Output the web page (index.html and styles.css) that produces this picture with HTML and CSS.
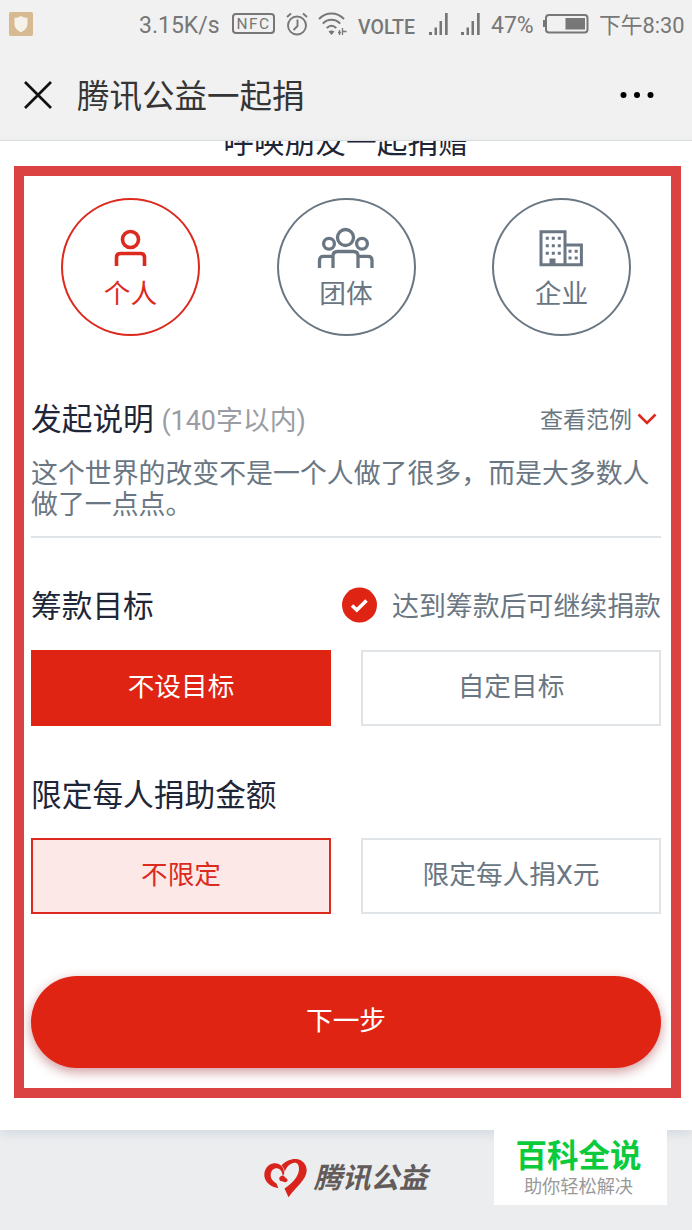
FILE: index.html
```html
<!DOCTYPE html>
<html lang="zh-CN">
<head>
<meta charset="UTF-8">
<meta name="viewport" content="width=device-width, initial-scale=1">
<title>腾讯公益一起捐</title>
<link rel="stylesheet" href="styles.css">
</head>
<body>
    <div class="status-bar">
        <svg class="shield" width="24" height="24" viewBox="0 0 24 24">
            <rect width="24" height="24" rx="2" fill="#d7b992"/>
            <path d="M12 4C10 5.3 8 5.8 5.5 5.8V12c0 3.6 2.500 6.3 6.500 8.2 4-1.9 6.500-4.6 6.500-8.2V5.8C16 5.8 14 5.3 12 4z" fill="#f6f1e9"/>
        </svg>
        <div class="status-right">
            <span class="speed">3.15K/s</span>
            <span class="nfc">NFC</span>
            <svg class="alarm" width="22" height="24" viewBox="0 0 22 24" fill="none" stroke="#777" stroke-width="1.9">
                <circle cx="11" cy="13.5" r="9"/>
                <path d="M11.500 7.500v6.500l-4 4M1 5l4-3.500M21 5l-4-3.500"/>
            </svg>
            <svg class="wifi" width="29" height="24" viewBox="0 0 29 24" fill="none" stroke="#777" stroke-width="2">
                <path d="M1 7C8-.3 19-.3 26 7M4.800 11.600c5-5 12.400-5 17.400 0M8.700 16c3-2.800 6.600-2.800 9.600 0"/>
                <path d="M10.500 19.500c2-1.300 4-1.300 6 0l-3 3.500z" fill="#777" stroke="none"/>
                <path d="M21.500 18v5M24.500 16v7M20 20.500h3M24 19.500h4.500" stroke-width="1.3"/>
            </svg>
            <span class="volte">VOLTE</span>
            <svg class="signal" width="20" height="24" viewBox="0 0 20 24" fill="#777">
                <path d="M0 20h3v3H0zM5.500 15.500H8V23H5.500zM10.500 9H13v14h-2.500zM16 1h2.700v22H16z"/>
            </svg>
            <svg class="signal" width="20" height="24" viewBox="0 0 20 24" fill="#777">
                <path d="M0 20h3v3H0zM5.500 15.500H8V23H5.500zM10.500 9H13v14h-2.500zM16 1h2.700v22H16z"/>
            </svg>
            <span class="percent">47%</span>
            <svg class="battery" width="46" height="20" viewBox="0 0 46 20">
                <rect x="3" y="1" width="41.5" height="17.5" rx="3" fill="none" stroke="#777" stroke-width="2"/>
                <path d="M0 6h2.500v7H0zM22.500 4H42v11.500H22.500z" fill="#777"/>
            </svg>
            <span class="time">下午8:30</span>
        </div>
    </div>

    <div class="nav-bar">
        <svg class="close" width="28" height="28" viewBox="0 0 28 28" stroke="#111" stroke-width="2.7">
            <path d="M1 1l26 26M27 1L1 27"/>
        </svg>
        <div class="nav-title">腾讯公益一起捐</div>
        <svg class="more" width="34" height="8" viewBox="0 0 34 8" fill="#000">
            <circle cx="3.5" cy="4" r="3"/>
            <circle cx="17" cy="4" r="3"/>
            <circle cx="30.5" cy="4" r="3"/>
        </svg>
    </div>

    <div class="page">
        <div class="slogan"><span>呼唤朋友一起捐赠</span></div>

        <div class="form-box">
            <div class="types">
                <div class="type active">
                    <svg width="60" height="44" viewBox="0 0 60 44" fill="none" stroke="currentColor" stroke-width="3.6">
                        <circle cx="29.5" cy="12.5" r="8"/>
                        <path d="M15.500 39V30.500q0-4 4-4h20q4 0 4 4V39"/>
                    </svg>
                    <span>个人</span>
                </div>
                <div class="type">
                    <svg width="60" height="44" viewBox="0 0 60 44" fill="none" stroke="currentColor" stroke-width="3.3">
                        <circle cx="29.5" cy="10.5" r="8"/>
                        <circle cx="13" cy="16.7" r="5.4"/>
                        <circle cx="46" cy="16.7" r="5.4"/>
                        <path d="M17 41V29q0-4.500 4.500-4.500h16q4.500 0 4.500 4.500v12M17 29.300H7.500q-4 0-4 4V41M42 29.300h10q4 0 4 4V41"/>
                    </svg>
                    <span>团体</span>
                </div>
                <div class="type">
                    <svg width="60" height="44" viewBox="0 0 60 44" fill="none" stroke="currentColor" stroke-width="3">
                        <path d="M9 4.800h24v33H9zM33 18h16.400v19.800H33z"/>
                        <path d="M13.800 11.200h15M13.800 18.700h15M13.800 26.200h15" stroke-dasharray="3 3"/>
                        <path d="M36.500 24.300h9.500M36.500 31h9.500" stroke-dasharray="3 3.2"/>
                        <path d="M17.500 31.500h6V38h-6z" fill="currentColor" stroke="none"/>
                    </svg>
                    <span>企业</span>
                </div>
            </div>

            <div class="row intro-row">
                <div class="heading">发起说明 <span class="limit">(140字以内)</span></div>
                <div class="sample">
                    <span>查看范例</span>
                    <svg width="20" height="14" viewBox="0 0 20 14" fill="none" stroke="#dc2a1f" stroke-width="2.6">
                        <path d="M1.500 2.500l8.500 8.500 8.500-8.500"/>
                    </svg>
                </div>
            </div>
            <div class="intro">这个世界的改变不是一个人做了很多，而是大多数人做了一点点。</div>

            <div class="row target-row">
                <div class="heading">筹款目标</div>
                <div class="keep">
                    <svg width="36" height="36" viewBox="0 0 36 36">
                        <circle cx="17.5" cy="18" r="17.5" fill="#df2414"/>
                        <path d="M10 18.500l4.800 4.500 9.700-9.500" fill="none" stroke="#fff" stroke-width="3.6"/>
                    </svg>
                    <span>达到筹款后可继续捐款</span>
                </div>
            </div>
            <div class="options">
                <div class="option filled">不设目标</div>
                <div class="option">自定目标</div>
            </div>

            <div class="row amount-row">
                <div class="heading">限定每人捐助金额</div>
            </div>
            <div class="options">
                <div class="option selected">不限定</div>
                <div class="option">限定每人捐X元</div>
            </div>

            <div class="next">下一步</div>
        </div>
    </div>

    <div class="footer">
        <svg class="heart" width="43" height="40" viewBox="0 0 43 40" fill="#d9231d">
            <path d="M17.500 7.500C21 3.500 26 1 31.500 1c7 .2 11.500 5.500 11.200 12C42 22 32 29 24.500 39.300L20.500 30.500C28.500 25 34.500 19 35 11.500 35.200 7 33.500 4.500 30.500 4.700 26 5.200 22.500 8.500 20.800 14 20.500 11 19 9 17.500 7.500z"/>
            <path d="M20.300 15.500C20 8.500 15.500 4.800 10 5.300 4 6 .2 11 .3 17.500.8 24.500 7 28.800 14.300 30.300L12.500 25.500C8.500 23 6.500 20.500 6.700 16.500 7 12 10.500 9.500 14 10.500c3 1 4.500 3.500 4.800 8z"/>
            <path d="M15.500 19.500c1-1.800 3.500-2.300 5-1 .8.500 1 1 1 1.500 2 .3 2.500 1.800 1.700 3.200-1.200 1.500-3.200 1.200-4.200.2-2.500.3-4.500-1.500-3.500-3.900z"/>
        </svg>
        <span class="brand">腾讯公益</span>
    </div>

    <div class="watermark">
        <div class="watermark-name">百科全说</div>
        <div class="watermark-text">助你轻松解决</div>
    </div>
</body>
</html>
```
FILE: styles.css
```css
* {
    box-sizing: border-box;
}

body {
    margin: 0;
    width: 692px;
    height: 1230px;
    position: relative;
    overflow: hidden;
    background-color: #fff;
    color: #6a7783;
    font-family: Roboto, "Noto Sans CJK SC", sans-serif;
    display: flex;
    flex-direction: column;
}

svg {
    display: block;
    flex-shrink: 0;
}

span {
    white-space: nowrap;
}

/* status bar */
.status-bar {
    height: 48px;
    padding: 0 9px;
    background-color: #f1f1f1;
    color: #777;
    display: flex;
    justify-content: space-between;
    align-items: center;
}

.status-right {
    display: flex;
    align-items: center;
    font-size: 23px;
    line-height: 30px;
    padding-top: 2px;
}

.speed {
    width: 81px;
    margin: 2px 12px 0 0;
}

.nfc {
    width: 43px;
    height: 21px;
    margin: 0 11px 3px 0;
    border: 2px solid #777;
    border-radius: 4px;
    font-size: 15.5px;
    line-height: 18px;
    letter-spacing: 1.5px;
    text-align: center;
}

.alarm {
    margin: 0 10px 3px 0;
}

.wifi {
    margin: 0 10px 3px 0;
}

.volte {
    width: 58px;
    margin: 5px 13px 0 1px;
    font-size: 19.5px;
    font-weight: 500;
}

.signal {
    margin: 0 12px 2px 0;
}

.signal + .percent {
    width: 42px;
    margin: 2px 10px 0 -2px;
    font-size: 23px;
}

.battery {
    margin: 0 10px 3px 0;
}

.time {
    width: 84px;
    margin-top: 2px;
    font-size: 21.8px;
}

/* nav bar */
.nav-bar {
    height: 93px;
    padding: 1px 38px 0 24px;
    background-color: #f1f1f1;
    border-bottom: 1px solid #dcdcdc;
    display: flex;
    align-items: center;
}

.nav-title {
    flex: 1;
    margin: 0 0 2px 25px;
    font-size: 32.5px;
    color: #353535;
}

/* page */
.page {
    height: 989px;
    padding: 0 11px 0 14px;
    background-color: #fff;
    position: relative;
    box-shadow: 0 4px 10px #d3dadf;
}

.slogan {
    height: 25px;
    overflow: hidden;
    display: flex;
    justify-content: center;
    align-items: flex-end;
    font-size: 30.7px;
    line-height: 40px;
    color: #1f2638;
}

.slogan span {
    margin: 0 3px 3px 0;
}

.form-box {
    height: 932px;
    padding: 22px 10px 0 7px;
    border: 10px solid #db4343;
}

.types {
    display: flex;
    justify-content: space-between;
    padding: 0 30px;
}

.type {
    width: 139px;
    height: 138px;
    padding-top: 27px;
    border: 2px solid #6a7783;
    border-radius: 50%;
    font-size: 26.7px;
    line-height: 46px;
    display: flex;
    flex-direction: column;
    align-items: center;
}

.type.active {
    color: #dc2a1f;
    border-color: #dc2a1f;
}

.row {
    height: 40px;
    display: flex;
    justify-content: space-between;
    align-items: center;
}

.heading {
    padding-top: 3px;
    font-size: 30.7px;
    line-height: 40px;
    color: #1f2638;
}

.limit {
    font-size: 26.9px;
    color: #9a9da3;
}

.intro-row {
    margin-top: 63px;
}

.sample {
    display: flex;
    align-items: center;
    gap: 5px;
    padding-right: 4px;
    font-size: 23px;
}

.sample span {
    margin-bottom: 2px;
}

.intro {
    height: 79px;
    margin-top: 20px;
    border-bottom: 2px solid #e1e4e6;
    font-size: 26.9px;
    line-height: 31px;
}

.target-row {
    margin-top: 47px;
}

.keep {
    display: flex;
    align-items: center;
    gap: 14px;
    font-size: 26.9px;
}

.keep span {
    margin-bottom: 2px;
}

.options {
    display: flex;
    gap: 30px;
    margin-top: 25px;
}

.option {
    flex: 1;
    height: 76px;
    border: 2px solid #e1e4e6;
    font-size: 26.7px;
    line-height: 70px;
    text-align: center;
}

.option.filled {
    background-color: #df2414;
    border-color: #df2414;
    color: #fff;
}

.option.selected {
    background-color: #fce9e7;
    border-color: #dc2a1f;
    color: #dc2a1f;
}

.amount-row {
    margin-top: 48px;
}

.amount-row + .options {
    margin-top: 24px;
}

.next {
    height: 92px;
    margin-top: 62px;
    border-radius: 46px;
    background-color: #df2414;
    box-shadow: 0 4px 12px rgba(150, 30, 40, 0.45);
    color: #fff;
    font-size: 26.7px;
    line-height: 90px;
    text-align: center;
}

/* footer */
.footer {
    height: 100px;
    padding-bottom: 5px;
    background-color: #ecedef;
    display: flex;
    justify-content: center;
    align-items: center;
    gap: 6px;
}

.brand {
    padding-top: 3px;
    font-size: 28.5px;
    font-weight: 700;
    font-style: italic;
    line-height: 40px;
    color: #625b59;
}

.watermark {
    position: absolute;
    left: 494px;
    top: 1130px;
    width: 173px;
    height: 75px;
    padding-right: 4px;
    background-color: #fff;
    text-align: center;
}

.watermark-name {
    margin-top: 7px;
    font-size: 31.5px;
    font-weight: 700;
    line-height: 40px;
    color: #0bcb3c;
}

.watermark-text {
    font-size: 18.2px;
    line-height: 19px;
    color: #999;
}
```
